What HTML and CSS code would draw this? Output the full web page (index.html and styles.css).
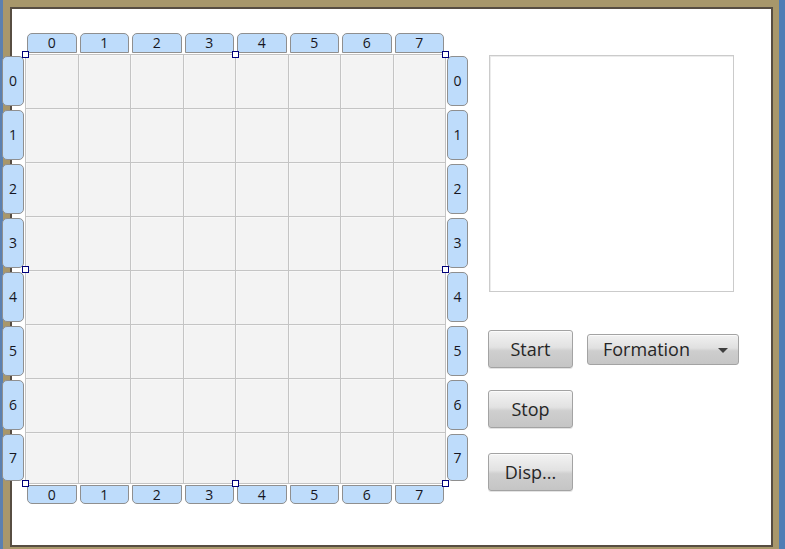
FILE: index.html
```html
<!DOCTYPE html>
<html>
<head>
<meta charset="utf-8">
<link rel="stylesheet" href="styles.css">
</head>
<body>
<div class="frame">
  <div class="window">
    <div class="board">
      <div class="corner"></div>
      <div class="colhead top">
        <div class="hbox">0</div><div class="hbox">1</div><div class="hbox">2</div><div class="hbox">3</div>
        <div class="hbox">4</div><div class="hbox">5</div><div class="hbox">6</div><div class="hbox">7</div>
      </div>
      <div class="corner"></div>
      <div class="rowhead">
        <div class="vbox">0</div><div class="vbox">1</div><div class="vbox">2</div><div class="vbox">3</div>
        <div class="vbox">4</div><div class="vbox">5</div><div class="vbox">6</div><div class="vbox">7</div>
      </div>
      <div class="cells">
        <div class="cell"></div><div class="cell"></div><div class="cell"></div><div class="cell"></div><div class="cell"></div><div class="cell"></div><div class="cell"></div><div class="cell"></div>
        <div class="cell"></div><div class="cell"></div><div class="cell"></div><div class="cell"></div><div class="cell"></div><div class="cell"></div><div class="cell"></div><div class="cell"></div>
        <div class="cell"></div><div class="cell"></div><div class="cell"></div><div class="cell"></div><div class="cell"></div><div class="cell"></div><div class="cell"></div><div class="cell"></div>
        <div class="cell"></div><div class="cell"></div><div class="cell"></div><div class="cell"></div><div class="cell"></div><div class="cell"></div><div class="cell"></div><div class="cell"></div>
        <div class="cell"></div><div class="cell"></div><div class="cell"></div><div class="cell"></div><div class="cell"></div><div class="cell"></div><div class="cell"></div><div class="cell"></div>
        <div class="cell"></div><div class="cell"></div><div class="cell"></div><div class="cell"></div><div class="cell"></div><div class="cell"></div><div class="cell"></div><div class="cell"></div>
        <div class="cell"></div><div class="cell"></div><div class="cell"></div><div class="cell"></div><div class="cell"></div><div class="cell"></div><div class="cell"></div><div class="cell"></div>
        <div class="cell"></div><div class="cell"></div><div class="cell"></div><div class="cell"></div><div class="cell"></div><div class="cell"></div><div class="cell"></div><div class="cell"></div>
        <span class="handle h-tl"></span><span class="handle h-tc"></span><span class="handle h-tr"></span>
        <span class="handle h-ml"></span><span class="handle h-mr"></span>
        <span class="handle h-bl"></span><span class="handle h-bc"></span><span class="handle h-br"></span>
      </div>
      <div class="rowhead">
        <div class="vbox">0</div><div class="vbox">1</div><div class="vbox">2</div><div class="vbox">3</div>
        <div class="vbox">4</div><div class="vbox">5</div><div class="vbox">6</div><div class="vbox">7</div>
      </div>
      <div class="corner"></div>
      <div class="colhead bottom">
        <div class="hbox">0</div><div class="hbox">1</div><div class="hbox">2</div><div class="hbox">3</div>
        <div class="hbox">4</div><div class="hbox">5</div><div class="hbox">6</div><div class="hbox">7</div>
      </div>
      <div class="corner"></div>
    </div>
    <div class="panel">
      <div class="textbox"></div>
      <div class="row1">
        <button class="btn">Start</button>
        <div class="combo"><span>Formation</span><span class="arrow"></span></div>
      </div>
      <button class="btn stop">Stop</button>
      <button class="btn disp">Disp...</button>
    </div>
  </div>
</div>
</body>
</html>
```

FILE: styles.css
```css
html, body {
  margin: 0;
  padding: 0;
}
body {
  width: 785px;
  height: 549px;
  overflow: hidden;
  font-family: "Open Sans", "Noto Sans", sans-serif;
}
.frame {
  box-sizing: border-box;
  width: 785px;
  height: 549px;
  background: #a8976b;
  border-left: 3px solid #5b80b0;
  border-right: 6px solid #4f7db5;
  padding: 7px 6px 2px 7px;
}
.window {
  box-sizing: border-box;
  width: 763px;
  height: 540px;
  border: 2px solid #574d42;
  background: #ffffff;
  display: flex;
  align-items: flex-start;
}
.board {
  margin-left: -10px;
  margin-top: 24px;
  display: grid;
  grid-template-columns: 22px 421px 21px;
  grid-template-rows: 20px 430px 19px;
  column-gap: 1px;
  row-gap: 1px;
  flex: none;
}
.colhead {
  display: grid;
  grid-template-columns: repeat(8, 1fr);
  column-gap: 1px;
  padding: 0 1px;
}
.hbox {
  margin: 0 1px;
  background: #bedcfb;
  border: 1px solid #8f8f8f;
  display: flex;
  align-items: center;
  justify-content: center;
  font-size: 14px;
  color: #161622;
  line-height: 1;
}
.top .hbox {
  border-radius: 5px 5px 0 0;
}
.bottom .hbox {
  border-radius: 0 0 5px 5px;
}
.rowhead {
  display: grid;
  grid-template-rows: repeat(7, 53px) 50px;
  row-gap: 1px;
  padding-top: 1px;
}
.vbox {
  margin: 1px 0 2px;
  background: #bedcfb;
  border: 1px solid #8f8f8f;
  border-radius: 5px;
  display: flex;
  align-items: center;
  justify-content: center;
  font-size: 14px;
  color: #161622;
  line-height: 1;
}
.cells {
  position: relative;
  box-sizing: border-box;
  height: 430px;
  border: 1px solid #c4c4c4;
  background: #c4c4c4;
  display: grid;
  grid-template-columns: repeat(8, 1fr);
  grid-template-rows: repeat(7, 53px) 50px;
  gap: 1px;
}
.cell {
  background: #f3f3f3;
  box-shadow: inset 1px 1px 0 #f7f7f7;
}
.handle {
  position: absolute;
  box-sizing: border-box;
  width: 7px;
  height: 7px;
  border: 1px solid #00007a;
  background: #ffffff;
}
.h-tl { left: -4px; top: -4px; }
.h-tc { left: 206px; top: -4px; }
.h-tr { left: 416px; top: -4px; }
.h-ml { left: -4px; top: 211px; }
.h-mr { left: 416px; top: 211px; }
.h-bl { left: -4px; top: 425px; }
.h-bc { left: 206px; top: 425px; }
.h-br { left: 416px; top: 425px; }

.panel {
  margin-left: 20px;
  padding-top: 46px;
  display: flex;
  flex-direction: column;
  align-items: flex-start;
}
.textbox {
  box-sizing: border-box;
  margin-left: 1px;
  width: 245px;
  height: 237px;
  border: 1px solid #cbcbcb;
  box-shadow: inset 1px 1px 0 #ececec;
  background: #ffffff;
}
.row1 {
  margin-top: 38px;
  display: flex;
  align-items: center;
  gap: 14px;
}
.btn {
  box-sizing: border-box;
  width: 85px;
  height: 38px;
  margin: 0;
  padding: 0;
  border: 1px solid #a3a3a3;
  border-radius: 3px;
  background: linear-gradient(to bottom, #f3f3f3 0%, #e2e2e2 45%, #cfcfcf 55%, #c5c5c5 100%);
  box-shadow: inset 0 1px 0 #fbfbfb, 0 1px 0 #e4e4e4;
  font-family: "Open Sans", "Noto Sans", sans-serif;
  font-size: 18px;
  color: #262626;
  line-height: 1;
}
.stop {
  margin-top: 22px;
}
.disp {
  margin-top: 25px;
}
.combo {
  box-sizing: border-box;
  width: 152px;
  height: 31px;
  border: 1px solid #a3a3a3;
  border-radius: 3px;
  background: linear-gradient(to bottom, #f1f1f1 0%, #e0e0e0 45%, #cecece 55%, #c6c6c6 100%);
  box-shadow: inset 0 1px 0 #fbfbfb;
  display: flex;
  align-items: center;
  justify-content: space-between;
  padding: 0 10px 0 15px;
  font-size: 18px;
  color: #262626;
  line-height: 1;
}
.arrow {
  width: 0;
  height: 0;
  border-left: 5px solid transparent;
  border-right: 5px solid transparent;
  border-top: 5px solid #3e3e3e;
  margin-top: 2px;
}
```
